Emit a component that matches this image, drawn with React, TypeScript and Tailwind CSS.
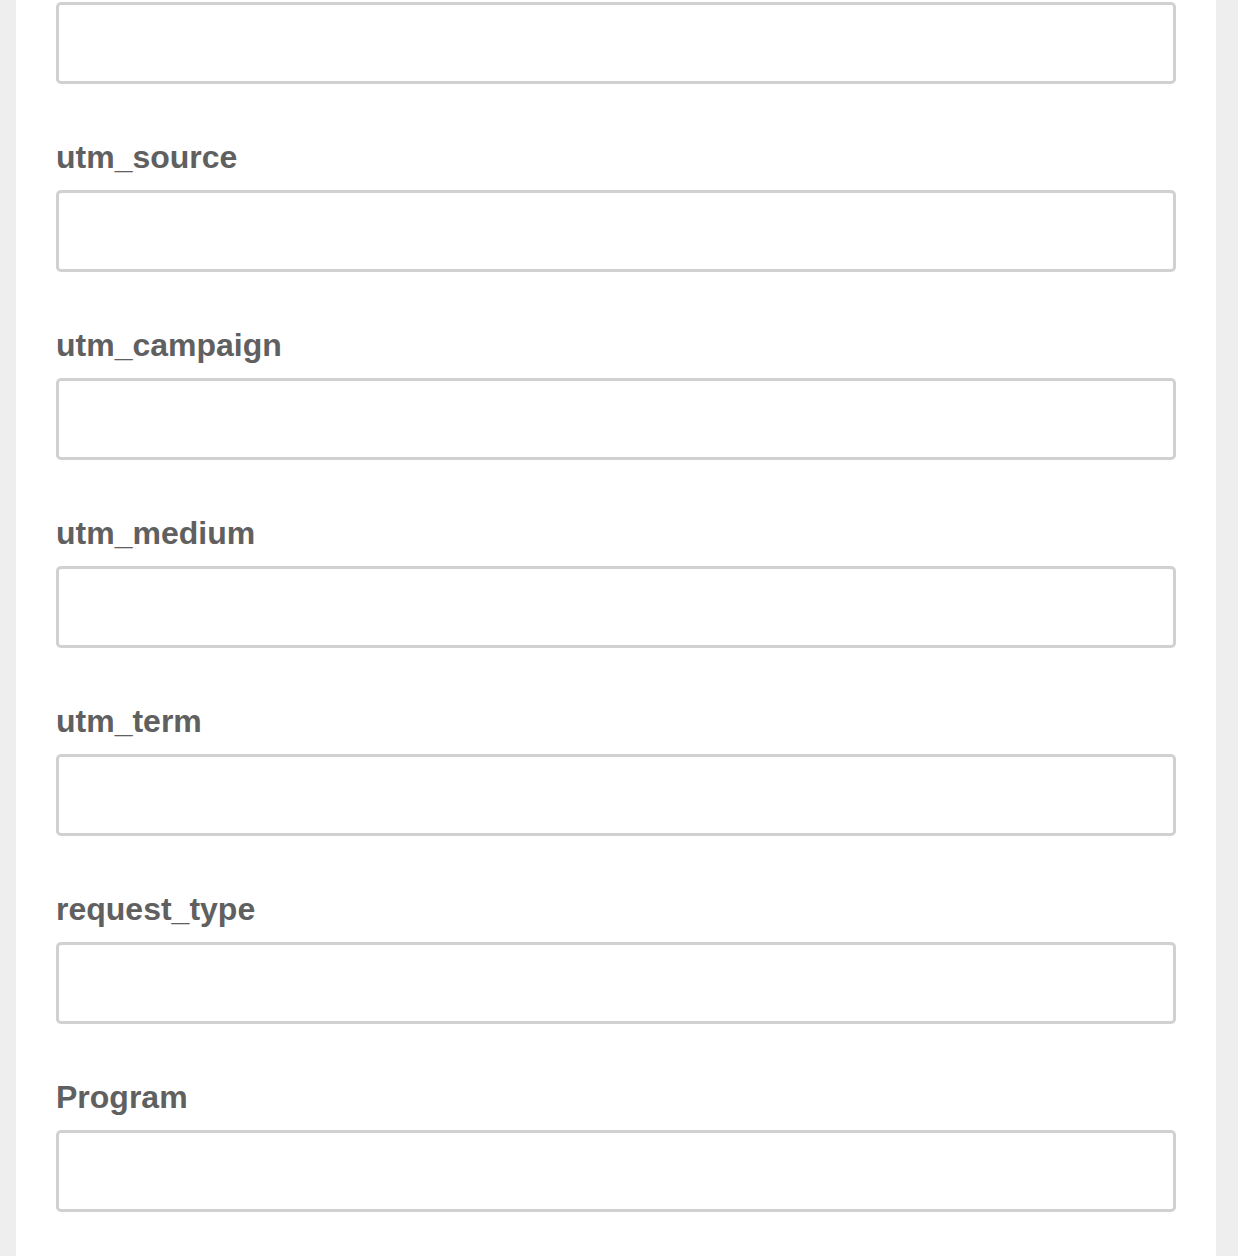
import React from "react";

const fields = ["utm_source", "utm_campaign", "utm_medium", "utm_term", "request_type", "Program"];

export default function App() {
  return (
    <div className="min-h-[1256px] bg-[#eeeeee] pl-[16px] pr-[22px] w-[1238px]" style={{ fontFamily: '"Liberation Sans", Arial, sans-serif' }}>
      <div className="bg-white min-h-[1256px] px-[40px] pt-[2px] pb-[44px] flex flex-col">
        <input className="block w-full h-[82px] border-[3px] border-[#d1d1d1] rounded-[5px] bg-white outline-none" />
        {fields.map((f) => (
          <div key={f} className="mt-[53px] flex flex-col">
            <label className="block text-[32px] leading-[40px] font-bold text-[#606060] mb-[13px]">{f}</label>
            <input className="block w-full h-[82px] border-[3px] border-[#d1d1d1] rounded-[5px] bg-white outline-none" />
          </div>
        ))}
      </div>
    </div>
  );
}
